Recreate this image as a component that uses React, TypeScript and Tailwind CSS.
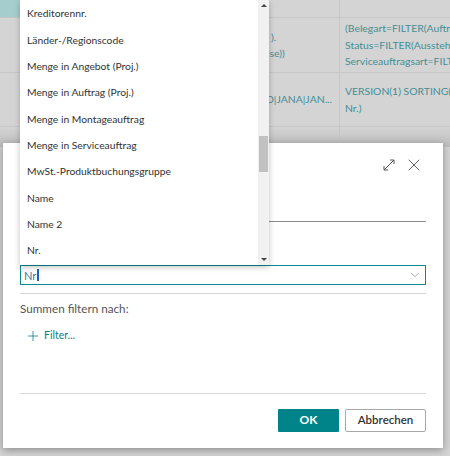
import { ChevronDown, Plus, X } from 'lucide-react';

const items = [
  'Kreditorennr.',
  'Länder-/Regionscode',
  'Menge in Angebot (Proj.)',
  'Menge in Auftrag (Proj.)',
  'Menge in Montageauftrag',
  'Menge in Serviceauftrag',
  'MwSt.-Produktbuchungsgruppe',
  'Name',
  'Name 2',
  'Nr.',
];

function ExpandIcon() {
  return (
    <svg width="14" height="14" viewBox="0 0 14 14" fill="none" stroke="#555" strokeWidth="1">
      <path d="M2 12 L12 2 M8 2 H12 V6 M2 8 V12 H6" />
    </svg>
  );
}

export default function App() {
  return (
    <div className="relative w-[450px] h-[456px] overflow-hidden bg-[#d4d4d4] font-['Lato','Liberation_Sans',sans-serif]">
      {/* page behind the modal */}
      <div className="flex flex-col text-[10.4px] text-[#448e94]">
        <div className="flex h-[18px] border-b border-[#c6c6c6]">
          <div className="w-[20px] bg-[#a6cdcd]" />
          <div className="w-[320px] border-r border-[#c6c6c6]" />
          <div className="flex-1" />
        </div>
        <div className="flex h-[55px] border-b border-[#c6c6c6]">
          <div className="w-[340px] shrink-0 border-r border-[#c6c6c6] flex flex-col justify-center leading-[16px] whitespace-nowrap">
            <span className="pl-[271px]">).</span>
            <span className="pl-[267px]">lse))</span>
          </div>
          <div className="flex-1 min-w-0 overflow-hidden flex flex-col justify-center pl-[5px] leading-[16.5px] whitespace-nowrap">
            <span>(Belegart=FILTER(Auftrag)</span>
            <span>Status=FILTER(Ausstehend)</span>
            <span>Serviceauftragsart=FILTER</span>
          </div>
        </div>
        <div className="flex h-[54px] border-b border-[#c6c6c6]">
          <div className="w-[340px] shrink-0 border-r border-[#c6c6c6] flex items-center justify-end pr-[7px] whitespace-nowrap">
            <span>AD|JANA|JAN...</span>
          </div>
          <div className="flex-1 min-w-0 overflow-hidden flex flex-col justify-center pl-[5px] leading-[16.5px] whitespace-nowrap">
            <span>VERSION(1) SORTING(Beleg</span>
            <span>Nr.)</span>
          </div>
        </div>
        <div className="flex h-[20px] bg-gradient-to-b from-[#d4d4d4] to-[#bdbdbd]">
          <div className="w-[340px] shrink-0 border-r border-[#c6c6c6]" />
        </div>
      </div>

      {/* dialog */}
      <div className="absolute left-[3px] top-[143px] w-[440px] h-[305px] bg-white shadow-[0_2px_8px_rgba(0,0,0,0.35)] px-[17px] flex flex-col">
        <div className="flex justify-end items-center gap-[8px] h-[44px] pr-[2px] text-[#555]">
          <ExpandIcon />
          <X size={20} strokeWidth={1.1} />
        </div>
        <div className="h-[35px] border-b border-[#8c8c8c] ml-[249px]" />
        <div className="h-[43px]" />
        <div className="h-[20px] border border-[#0a8a8f] flex items-center justify-between px-[3px]">
          <span className="text-[11px] text-[#2c7f9a] leading-none flex items-center">
            Nr<span className="inline-block w-[2px] h-[12px] bg-[#1a5fd0] ml-[1px]" />
          </span>
          <ChevronDown size={14} strokeWidth={1} className="text-[#777]" />
        </div>
        <div className="mt-[8px] border-t border-[#d6d6d6]" />
        <div className="mt-[6px] text-[11.7px] text-[#555]">Summen filtern nach:</div>
        <div className="mt-[10px] flex items-center gap-[3px] pl-[5px] text-[#0a7f86]">
          <Plus size={16} strokeWidth={1.2} />
          <span className="text-[10.5px]">Filter...</span>
        </div>
        <div className="mt-[49px] border-t border-[#d6d6d6]" />
        <div className="mt-[15px] flex justify-end gap-[6px]">
          <button className="w-[61px] h-[23px] bg-[#008489] text-white text-[12px] font-bold rounded-[1px]">
            OK
          </button>
          <button className="w-[81px] h-[23px] bg-white border border-[#a8a8a8] text-[#333] text-[11.5px] font-semibold rounded-[2px]">
            Abbrechen
          </button>
        </div>
      </div>

      {/* dropdown list */}
      <div className="absolute left-[20px] top-0 w-[249px] h-[265px] bg-white shadow-[0_2px_6px_rgba(0,0,0,0.25)] flex">
        <div className="flex-1 flex flex-col pt-[1px]">
          {items.map((t) => (
            <div key={t} className="h-[26.3px] flex items-center pl-[7px] text-[10.3px] text-[#333] whitespace-nowrap">
              {t}
            </div>
          ))}
        </div>
        <div className="w-[11px] bg-[#f1f1f1] flex flex-col items-center justify-between py-[4px] relative">
          <div className="w-0 h-0 border-x-[3px] border-x-transparent border-b-[3px] border-b-[#444]" />
          <div className="absolute left-[1px] top-[136px] w-[9px] h-[36px] bg-[#c1c1c1]" />
          <div className="w-0 h-0 border-x-[3px] border-x-transparent border-t-[3px] border-t-[#444]" />
        </div>
      </div>
    </div>
  );
}
